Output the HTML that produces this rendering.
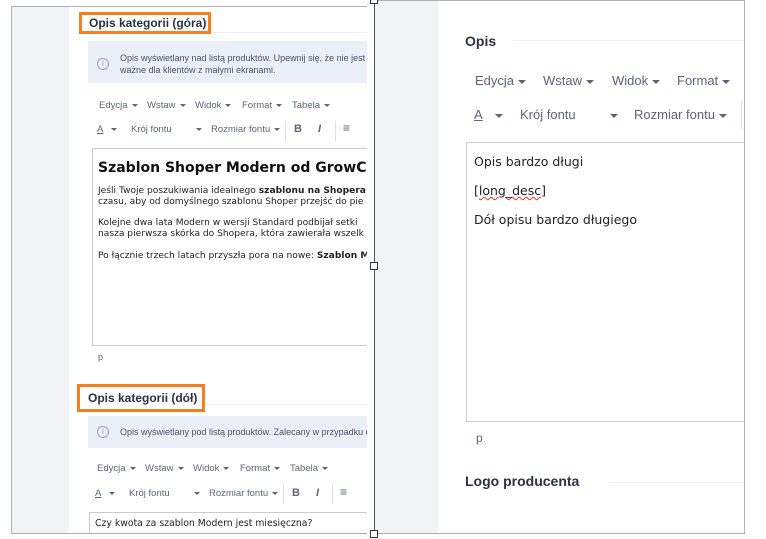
<!DOCTYPE html>
<html><head><meta charset="utf-8"><style>
*{margin:0;padding:0;box-sizing:border-box}
body{width:766px;height:539px;background:#fff;position:relative;overflow:hidden;font-family:"Liberation Sans",sans-serif;color:#222}
.a{position:absolute;white-space:nowrap}
.pan{position:absolute;overflow:hidden;background:#fff}
.side{position:absolute;top:0;bottom:0;left:0;background:#f2f3f7}
.m{color:#5c6478}
.car{display:inline-block;width:0;height:0;border-left:3px solid transparent;border-right:3px solid transparent;border-top:3px solid #5c6478;vertical-align:middle;margin-left:4px}
.R .car{border-left:4px solid transparent;border-right:4px solid transparent;border-top:4px solid #5c6478}
.ob{position:absolute;border:3px solid #f77f1f}
.hd{font-weight:bold;color:#2b3145}
.h{position:absolute;width:8px;height:8px;border:1px solid #333;background:#fff}
.s{font-size:9.5px}
.b{font-size:13px}
</style></head><body>

<!-- left panel -->
<div class="pan" style="left:11px;top:6px;width:356px;height:528px;border:1px solid #b0b0b0;border-right:none">
 <div class="side" style="width:57px"></div>
 <div class="a" style="left:190px;top:25px;width:170px;height:1px;background:#eceef2"></div>
 <div class="a hd" style="left:77px;top:9px;font-size:12px">Opis kategorii (góra)</div>
 <div class="a" style="left:76px;top:34px;width:290px;height:42px;background:#ebeff8"></div>
 <div class="a" style="left:85px;top:51px;width:12px;height:12px;border:1px solid #9aa3bd;border-radius:50%;font-size:8px;color:#9aa3bd;text-align:center;line-height:10px">i</div>
 <div class="a m" style="left:108px;top:45px;font-size:9px;line-height:12px;color:#4a5268">Opis wyświetlany nad listą produktów. Upewnij się, że nie jest zbyt<br>ważne dla klientów z małymi ekranami.</div>
 <div class="a m s" style="left:87px;top:93px">Edycja<span class="car"></span></div>
 <div class="a m s" style="left:135px;top:93px">Wstaw<span class="car"></span></div>
 <div class="a m s" style="left:183px;top:93px">Widok<span class="car"></span></div>
 <div class="a m s" style="left:230px;top:93px">Format<span class="car"></span></div>
 <div class="a m s" style="left:280px;top:93px">Tabela<span class="car"></span></div>
 <div class="a m s" style="left:85px;top:117px"><span style="text-decoration:underline">A</span><span class="car" style="margin-left:8px"></span></div>
 <div class="a m s" style="left:119px;top:117px">Krój fontu</div>
 <div class="a m s" style="left:180px;top:117px"><span class="car"></span></div>
 <div class="a m s" style="left:199px;top:117px">Rozmiar fontu<span class="car"></span></div>
 <div class="a" style="left:273px;top:114px;width:1px;height:20px;background:#dde"></div>
 <div class="a m" style="left:282px;top:116px;font-size:11px;font-weight:bold">B</div>
 <div class="a m" style="left:306px;top:116px;font-size:11px;font-style:italic;font-weight:bold">I</div>
 <div class="a" style="left:323px;top:114px;width:1px;height:20px;background:#dde"></div>
 <div class="a m" style="left:331px;top:114px;font-size:12px">≡</div>
 <div class="a" style="left:80px;top:141px;width:290px;height:198px;border:1px solid #c9ccd6"></div>
 <div class="a" style="left:86px;top:153px;font-family:'DejaVu Sans',sans-serif;font-size:14px;font-weight:bold;color:#111">Szablon Shoper Modern od GrowCom</div>
 <div class="a" style="left:86px;top:179px;font-family:'DejaVu Sans',sans-serif;font-size:9.1px;line-height:11px;color:#222">Jeśli Twoje poszukiwania idealnego <b>szablonu na Shopera</b><br>czasu, aby od domyślnego szablonu Shoper przejść do pie</div>
 <div class="a" style="left:86px;top:211px;font-family:'DejaVu Sans',sans-serif;font-size:9.1px;line-height:11px;color:#222">Kolejne dwa lata Modern w wersji Standard podbijał setki<br>nasza pierwsza skórka do Shopera, która zawierała wszelk</div>
 <div class="a" style="left:86px;top:244px;font-family:'DejaVu Sans',sans-serif;font-size:9.1px;color:#222">Po łącznie trzech latach przyszła pora na nowe: <b>Szablon M</b></div>
 <div class="a m" style="left:86px;top:345px;font-size:9px">p</div>
 <div class="a" style="left:190px;top:397px;width:170px;height:1px;background:#eceef2"></div>
 <div class="a hd" style="left:76px;top:384px;font-size:12px">Opis kategorii (dół)</div>
 <div class="a" style="left:76px;top:409px;width:290px;height:32px;background:#ebeff8"></div>
 <div class="a" style="left:85px;top:419px;width:12px;height:12px;border:1px solid #9aa3bd;border-radius:50%;font-size:8px;color:#9aa3bd;text-align:center;line-height:10px">i</div>
 <div class="a" style="left:108px;top:420px;font-size:9px;color:#4a5268">Opis wyświetlany pod listą produktów. Zalecany w przypadku dłu</div>
 <div class="a m s" style="left:85px;top:456px">Edycja<span class="car"></span></div>
 <div class="a m s" style="left:133px;top:456px">Wstaw<span class="car"></span></div>
 <div class="a m s" style="left:181px;top:456px">Widok<span class="car"></span></div>
 <div class="a m s" style="left:228px;top:456px">Format<span class="car"></span></div>
 <div class="a m s" style="left:278px;top:456px">Tabela<span class="car"></span></div>
 <div class="a m s" style="left:83px;top:481px"><span style="text-decoration:underline">A</span><span class="car" style="margin-left:8px"></span></div>
 <div class="a m s" style="left:117px;top:481px">Krój fontu</div>
 <div class="a m s" style="left:178px;top:481px"><span class="car"></span></div>
 <div class="a m s" style="left:197px;top:481px">Rozmiar fontu<span class="car"></span></div>
 <div class="a" style="left:271px;top:477px;width:1px;height:20px;background:#dde"></div>
 <div class="a m" style="left:280px;top:480px;font-size:11px;font-weight:bold">B</div>
 <div class="a m" style="left:304px;top:480px;font-size:11px;font-style:italic;font-weight:bold">I</div>
 <div class="a" style="left:320px;top:477px;width:1px;height:20px;background:#dde"></div>
 <div class="a m" style="left:328px;top:478px;font-size:12px">≡</div>
 <div class="a" style="left:77px;top:505px;width:290px;height:40px;border:1px solid #c9ccd6"></div>
 <div class="a" style="left:83px;top:511px;font-family:'DejaVu Sans',sans-serif;font-size:9.3px;color:#222">Czy kwota za szablon Modern jest miesięczna?</div>
</div>
<div class="ob" style="left:79px;top:12px;width:132px;height:22px"></div>
<div class="ob" style="left:77px;top:384px;width:128px;height:28px"></div>

<!-- right panel -->
<div class="pan R" style="left:374px;top:0;width:371px;height:534px;border:1px solid #b0b0b0;border-left:1px solid #555">
 <div class="side" style="width:63px"></div>
 <div class="a" style="left:138px;top:39px;width:240px;height:1px;background:#eceef2"></div>
 <div class="a hd" style="left:90px;top:32px;font-size:14px">Opis</div>
 <div class="a m b" style="left:100px;top:72px">Edycja<span class="car"></span></div>
 <div class="a m b" style="left:168px;top:72px">Wstaw<span class="car"></span></div>
 <div class="a m b" style="left:237px;top:72px">Widok<span class="car"></span></div>
 <div class="a m b" style="left:302px;top:72px">Format<span class="car"></span></div>
 <div class="a m b" style="left:99px;top:106px"><span style="text-decoration:underline">A</span><span class="car" style="margin-left:12px"></span></div>
 <div class="a m b" style="left:145px;top:106px">Krój fontu</div>
 <div class="a m b" style="left:231px;top:106px"><span class="car"></span></div>
 <div class="a m b" style="left:259px;top:106px">Rozmiar fontu<span class="car"></span></div>
 <div class="a" style="left:366px;top:100px;width:1px;height:28px;background:#dde"></div>
 <div class="a" style="left:91px;top:141px;width:290px;height:280px;border:1px solid #c9ccd6"></div>
 <div class="a" style="left:99px;top:153px;font-family:'DejaVu Sans',sans-serif;font-size:12.5px;color:#222">Opis bardzo długi</div>
 <div class="a" style="left:99px;top:182px;font-family:'DejaVu Sans',sans-serif;font-size:12.5px;color:#222">[<span style="text-decoration:underline wavy #e33;text-decoration-thickness:1px">long_desc</span>]</div>
 <div class="a" style="left:99px;top:211px;font-family:'DejaVu Sans',sans-serif;font-size:12.5px;color:#222">Dół opisu bardzo długiego</div>
 <div class="a m" style="left:101px;top:430px;font-size:12px">p</div>
 <div class="a" style="left:234px;top:481px;width:140px;height:1px;background:#eceef2"></div>
 <div class="a hd" style="left:90px;top:472px;font-size:14px">Logo producenta</div>
</div>
<div class="h" style="left:370px;top:-4px"></div>
<div class="h" style="left:370px;top:262px"></div>
<div class="h" style="left:370px;top:530px"></div>
</body></html>
